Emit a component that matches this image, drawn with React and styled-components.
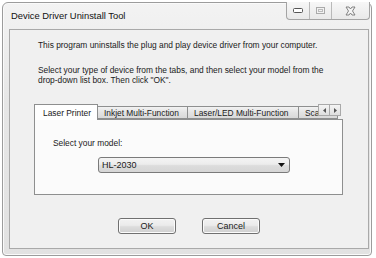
import styled, { createGlobalStyle } from "styled-components";

const GlobalStyle = createGlobalStyle`
  html, body {
    margin: 0;
    padding: 0;
    background: #ffffff;
  }
  body {
    font-family: "Liberation Sans", Arial, sans-serif;
    font-size: 8.4px;
    color: #1a1a1a;
  }
`;

const Window = styled.div`
  box-sizing: border-box;
  margin: 2px 0 0 2px;
  width: 370px;
  height: 254px;
  border: 1px solid #9c9c9c;
  border-radius: 6px 6px 4px 4px;
  background: linear-gradient(#f3f3f3, #e6e6e6 40%, #e2e2e2);
  box-shadow: inset 0 0 0 1px #fafafa;
  display: flex;
  flex-direction: column;
`;

const TitleBar = styled.div`
  height: 26px;
  display: flex;
  align-items: flex-start;
  padding-left: 8px;
`;

const Title = styled.span`
  font-size: 9.4px;
  line-height: 10px;
  margin-top: 8px;
  color: #111;
`;

const Caption = styled.div`
  margin-left: auto;
  margin-right: 1px;
  margin-top: -1px;
  display: flex;
  height: 17px;
  border: 1px solid #a4a4a4;
  border-top: none;
  border-radius: 0 0 4px 4px;
  overflow: hidden;
  background: linear-gradient(#f7f7f7, #e9e9e9);
`;

const CaptionButton = styled.div`
  width: ${(p) => p.$w}px;
  display: flex;
  align-items: center;
  justify-content: center;
  & + & {
    border-left: 1px solid #b9b9b9;
  }
`;

const Client = styled.div`
  flex: 1;
  margin: 0 2px 6px 6px;
  border: 1px solid #a9a9a9;
  background: #f0f0f0;
  padding: 10px 0 0 0;
  display: flex;
  flex-direction: column;
`;

const Text = styled.p`
  margin: 0 0 0 28px;
  line-height: 10px;
  & + & {
    margin-top: 15px;
  }
`;

const Tabs = styled.div`
  margin: 19px 0 0 24px;
  width: 309px;
  display: flex;
  flex-direction: column;
`;

const TabStrip = styled.div`
  display: flex;
  align-items: flex-end;
  height: 15px;
  position: relative;
`;

const Tab = styled.div`
  box-sizing: border-box;
  height: ${(p) => (p.$active ? 16 : 13)}px;
  padding: 0 ${(p) => (p.$active ? 8 : 6)}px;
  width: ${(p) => p.$w}px;
  flex: none;
  overflow: hidden;
  white-space: nowrap;
  display: flex;
  align-items: center;
  border: 1px solid #8e8f8f;
  border-bottom: ${(p) => (p.$active ? "none" : "1px solid #8e8f8f")};
  margin-bottom: ${(p) => (p.$active ? -1 : 0)}px;
  position: relative;
  z-index: ${(p) => (p.$active ? 2 : 1)};
  background: ${(p) =>
    p.$active ? "#ffffff" : "linear-gradient(#f2f2f2, #e3e3e3 50%, #d9d9d9)"};
  & + & {
    margin-left: -1px;
  }
`;

const Scroller = styled.div`
  position: absolute;
  right: 2px;
  top: 0;
  display: flex;
  z-index: 3;
`;

const ScrollArrow = styled.div`
  box-sizing: border-box;
  width: 12px;
  height: 12px;
  border: 1px solid #a9a9a9;
  background: linear-gradient(#f4f4f4, #dedede);
  display: flex;
  align-items: center;
  justify-content: center;
  & + & {
    margin-left: -1px;
  }
`;

const Panel = styled.div`
  box-sizing: border-box;
  height: 76px;
  border: 1px solid #8e8f8f;
  background: #fbfbfb;
  padding: 18px 0 0 18px;
`;

const Label = styled.div`
  line-height: 10px;
`;

const Select = styled.div`
  box-sizing: border-box;
  margin: 9px 0 0 45px;
  width: 192px;
  height: 16px;
  border: 1px solid #7a7a7a;
  border-radius: 3px;
  background: linear-gradient(#f4f4f4, #ececec 45%, #dcdcdc 55%, #d6d6d6);
  display: flex;
  align-items: center;
  justify-content: space-between;
  padding: 0 4px 0 3px;
  font-size: 9px;
`;

const Buttons = styled.div`
  display: flex;
  justify-content: center;
  gap: 26px;
  margin-top: 23px;
`;

const Button = styled.div`
  box-sizing: border-box;
  width: 58px;
  height: 16px;
  border: 1px solid #707070;
  border-radius: 3px;
  background: linear-gradient(#f2f2f2, #ebebeb 45%, #dddddd 55%, #cfcfcf);
  box-shadow: inset 0 0 0 1px #fbfbfb;
  display: flex;
  align-items: center;
  justify-content: center;
  font-size: 9px;
`;

const tabs = [
  { label: "Laser Printer", w: 64, active: true },
  { label: "Inkjet Multi-Function", w: 91 },
  { label: "Laser/LED Multi-Function", w: 112 },
  { label: "Scanner", w: 40 },
];

export default function App() {
  return (
    <>
      <GlobalStyle />
      <Window>
        <TitleBar>
          <Title>Device Driver Uninstall Tool</Title>
          <Caption>
            <CaptionButton $w={22}>
              <svg width="10" height="5" viewBox="0 0 10 5">
                <rect x="0.5" y="0.5" width="9" height="4" rx="1" fill="#fff" stroke="#555" />
              </svg>
            </CaptionButton>
            <CaptionButton $w={21}>
              <svg width="9" height="7" viewBox="0 0 9 7">
                <rect x="0.5" y="0.5" width="8" height="6" fill="#f2f2f2" stroke="#aaa" />
                <rect x="2.5" y="2.5" width="4" height="2" fill="none" stroke="#bbb" />
              </svg>
            </CaptionButton>
            <CaptionButton $w={37}>
              <svg width="11" height="10" viewBox="0 0 11 10">
                <path
                  d="M1 1 L4 1 L5.5 3 L7 1 L10 1 L7.5 5 L10 9 L7 9 L5.5 7 L4 9 L1 9 L3.5 5 Z"
                  fill="#f4f4f4"
                  stroke="#777"
                  strokeWidth="0.9"
                />
              </svg>
            </CaptionButton>
          </Caption>
        </TitleBar>
        <Client>
          <Text>This program uninstalls the plug and play device driver from your computer.</Text>
          <Text>
            Select your type of device from the tabs, and then select your model from the
            <br />
            drop-down list box. Then click "OK".
          </Text>
          <Tabs>
            <TabStrip>
              {tabs.map((t) => (
                <Tab key={t.label} $active={t.active} $w={t.w}>
                  {t.label}
                </Tab>
              ))}
              <Scroller>
                <ScrollArrow>
                  <svg width="3" height="5" viewBox="0 0 3 5">
                    <path d="M3 0 L0 2.5 L3 5 Z" fill="#555" />
                  </svg>
                </ScrollArrow>
                <ScrollArrow>
                  <svg width="3" height="5" viewBox="0 0 3 5">
                    <path d="M0 0 L3 2.5 L0 5 Z" fill="#555" />
                  </svg>
                </ScrollArrow>
              </Scroller>
            </TabStrip>
            <Panel>
              <Label>Select your model:</Label>
              <Select>
                <span>HL-2030</span>
                <svg width="7" height="4" viewBox="0 0 7 4">
                  <path d="M0 0 L7 0 L3.5 4 Z" fill="#111" />
                </svg>
              </Select>
            </Panel>
          </Tabs>
          <Buttons>
            <Button>OK</Button>
            <Button>Cancel</Button>
          </Buttons>
        </Client>
      </Window>
    </>
  );
}
